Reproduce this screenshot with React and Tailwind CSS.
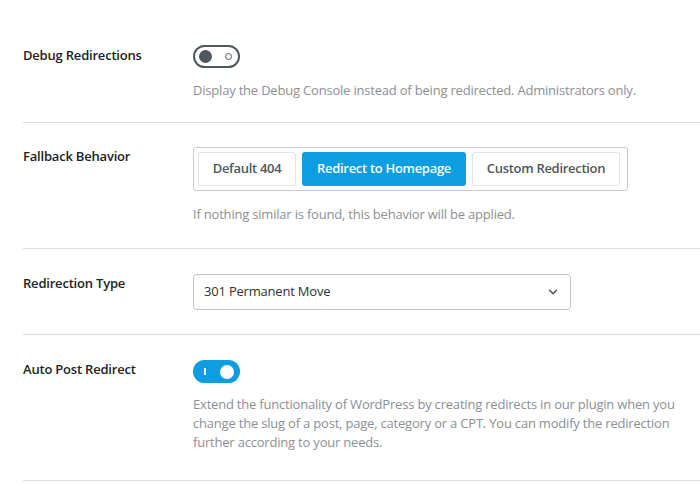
import React from "react";

function ToggleOff() {
  return (
    <div className="flex h-[23px] w-[47px] items-center justify-between rounded-full border-2 border-[#50575e] bg-white pl-[4px] pr-[6px]">
      <div className="h-[13px] w-[13px] rounded-full bg-[#50575e]" />
      <div className="h-[7px] w-[7px] rounded-full border-[1.5px] border-[#50575e]" />
    </div>
  );
}

function ToggleOn() {
  return (
    <div className="flex h-[23px] w-[47px] items-center justify-between rounded-full bg-[#0e9de0] pl-[11px] pr-[6px]">
      <div className="h-[7px] w-[2px] bg-white" />
      <div className="h-[14px] w-[14px] rounded-full bg-white" />
    </div>
  );
}

function Row({ label, children, className }) {
  return (
    <div className={"ml-[23px] flex border-b border-[#dcdcde] " + className}>
      <div className="-mt-[1px] w-[170px] shrink-0 text-[13px] font-semibold leading-[20px] tracking-[-0.2px] text-[#1d2327]">
        {label}
      </div>
      <div className="flex flex-col">{children}</div>
    </div>
  );
}

export default function App() {
  return (
    <div
      className="h-[484px] w-[700px] overflow-hidden bg-white"
      style={{ fontFamily: '"Open Sans", sans-serif' }}
    >
      <Row label="Debug Redirections" className="pb-[22px] pt-[45px] [&>div:first-child]:mt-0">
        <ToggleOff />
        <p className="mt-[13px] text-[13px] leading-[19px] tracking-[-0.2px] text-[#8c8f94]">
          Display the Debug Console instead of being redirected. Administrators only.
        </p>
      </Row>
      <Row label="Fallback Behavior" className="pb-[24px] pt-[24px]">
        <div className="flex w-[435px] gap-[6px] rounded-[3px] border border-[#c8c9cc] p-[4px]">
          <button className="h-[34px] w-[98px] rounded-[3px] border border-[#e3e3e3] bg-white text-[13px] font-semibold tracking-[-0.3px] text-[#50575e]">
            Default 404
          </button>
          <button className="h-[34px] w-[164px] rounded-[3px] bg-[#0e9de0] text-[13px] font-semibold tracking-[-0.3px] text-white">
            Redirect to Homepage
          </button>
          <button className="h-[34px] w-[148px] rounded-[3px] border border-[#e3e3e3] bg-white text-[13px] font-semibold tracking-[-0.3px] text-[#50575e]">
            Custom Redirection
          </button>
        </div>
        <p className="mt-[14px] text-[13px] leading-[19px] tracking-[-0.2px] text-[#8c8f94]">
          If nothing similar is found, this behavior will be applied.
        </p>
      </Row>
      <Row label="Redirection Type" className="pb-[24px] pt-[25px]">
        <div className="flex h-[36px] w-[378px] items-center justify-between rounded-[4px] border border-[#c3c4c7] pl-[10px] pr-[10px] text-[13px] tracking-[-0.2px] text-[#2c3338]">
          <span>301 Permanent Move</span>
          <svg width="14" height="14" viewBox="0 0 16 16" fill="none">
            <path d="M4 6l4 4 4-4" stroke="#50575e" strokeWidth="1.8" strokeLinecap="round" strokeLinejoin="round" />
          </svg>
        </div>
      </Row>
      <Row label="Auto Post Redirect" className="pb-[28px] pt-[25px]">
        <ToggleOn />
        <p className="mt-[12px] text-[13px] leading-[19px] tracking-[-0.2px] text-[#8c8f94]">
          Extend the functionality of WordPress by creating redirects in our plugin when you
          <br />
          change the slug of a post, page, category or a CPT. You can modify the redirection
          <br />
          further according to your needs.
        </p>
      </Row>
    </div>
  );
}
